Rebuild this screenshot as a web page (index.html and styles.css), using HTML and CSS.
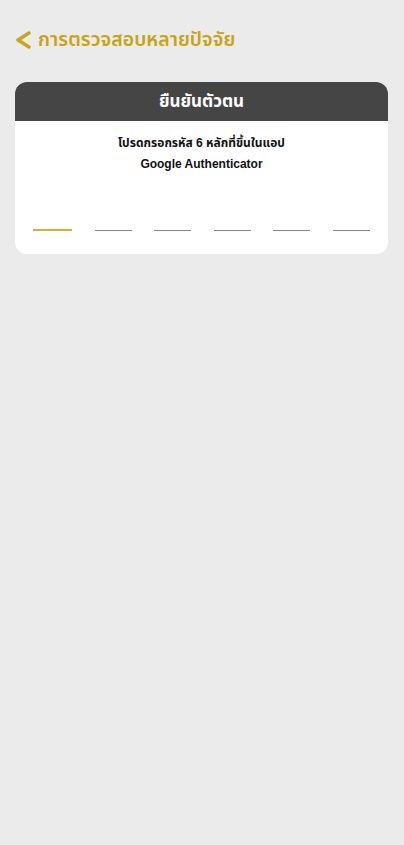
FILE: index.html
```html
<!DOCTYPE html>
<html lang="th">
<head>
    <meta charset="UTF-8">
    <meta name="viewport" content="width=device-width, initial-scale=1.0">
    <title>การตรวจสอบหลายปัจจัย</title>
    <link rel="stylesheet" href="styles.css">
</head>
<body>
    <div class="topbar">
        <svg class="back" width="16" height="18" viewBox="0 0 16 18">
            <path d="M14 2 L3 9 L14 16" fill="none" stroke="#caa514" stroke-width="3.4" stroke-linecap="round" stroke-linejoin="round"/>
        </svg>
        <span class="title">การตรวจสอบหลายปัจจัย</span>
    </div>

    <div class="card">
        <div class="card-head">ยืนยันตัวตน</div>
        <div class="card-body">
            <p class="msg">โปรดกรอกรหัส 6 หลักที่ขึ้นในแอป</p>
            <p class="msg">Google Authenticator</p>
            <div class="otp">
                <span class="digit active"></span>
                <span class="digit"></span>
                <span class="digit"></span>
                <span class="digit"></span>
                <span class="digit"></span>
                <span class="digit"></span>
            </div>
        </div>
    </div>
</body>
</html>
```

FILE: styles.css
```css
*{
    font-family: "Liberation Sans", "Noto Sans Thai", "Noto Sans", sans-serif;
    box-sizing: border-box;
}
body{
    margin: 0;
    background-color: #ebebeb;
}
.topbar{
    display: flex;
    align-items: center;
    padding: 30px 0 0 15px;
    height: 50px;
}
.back{
    margin-right: 7px;
}
.title{
    color: #c9a412;
    font-size: 19.5px;
    font-weight: 600;
}
.card{
    margin: 32px 16px 0 15px;
    background-color: #fff;
    border-radius: 12px;
    overflow: hidden;
}
.card-head{
    background-color: #454545;
    color: #fff;
    height: 39px;
    line-height: 39px;
    text-align: center;
    font-size: 17px;
    font-weight: bold;
}
.card-body{
    padding: 12px 18px 23px;
}
.msg{
    margin: 0;
    text-align: center;
    font-size: 12px;
    font-weight: bold;
    line-height: 21px;
    color: #111;
}
.otp{
    display: flex;
    align-items: flex-end;
    justify-content: space-between;
    margin-top: 54px;
}
.digit{
    width: 37px;
    height: 1px;
    background-color: #8a8a8a;
}
.digit.active{
    width: 39px;
    height: 2px;
    background-color: #dcb020;
}
```
